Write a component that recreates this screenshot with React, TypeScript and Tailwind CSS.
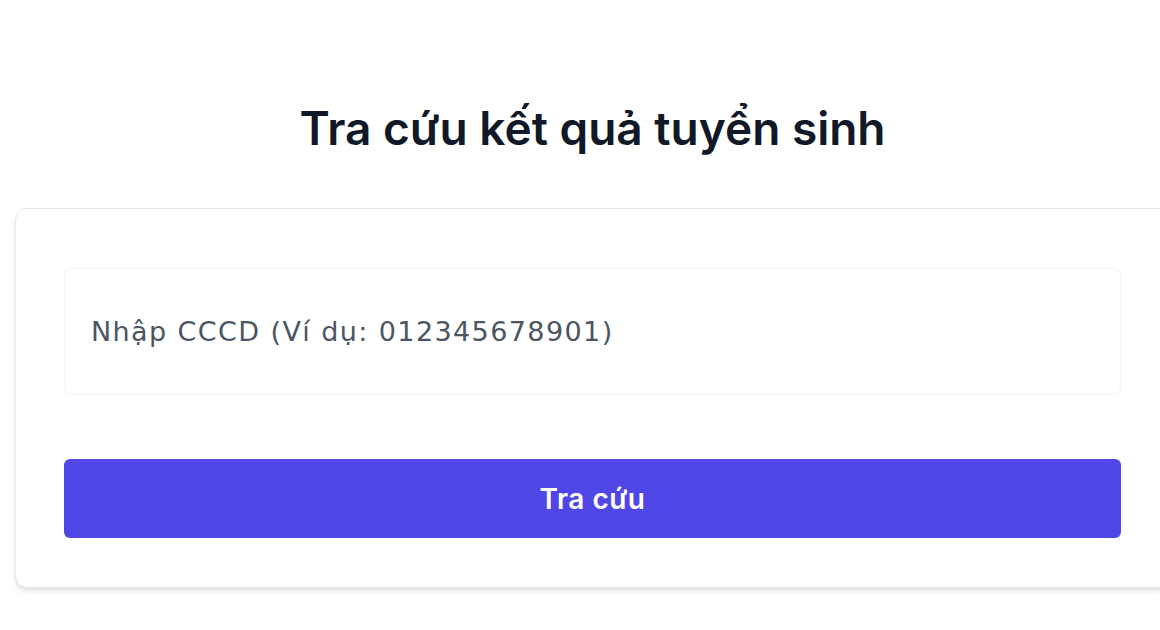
export default function App() {
  return (
    <div className="h-[630px] w-[1160px] overflow-hidden bg-white font-['Inter',sans-serif]">
      <div className="ml-[15px] w-[1155px] pt-[100px]">
        <h1 className="text-center text-[46px] leading-[56px] font-semibold text-[#111827]">
          Tra cứu kết quả tuyển sinh
        </h1>
        <div className="mt-[52px] rounded-xl border border-gray-200 bg-white px-12 pt-[59px] pb-[49px] shadow-md">
          <input
            type="text"
            placeholder="Nhập CCCD (Ví dụ: 012345678901)"
            className="block h-[127px] w-full rounded-lg border border-gray-100 bg-white px-[26px] font-['DejaVu_Sans',sans-serif] text-[27px] tracking-[1.4px] text-gray-800 outline-none placeholder:text-[#4b5563]"
          />
          <button
            type="button"
            className="mt-16 flex h-[79px] w-full items-center justify-center rounded-md bg-[#4f46e5] text-[28px] font-semibold tracking-[0.5px] text-white"
          >
            Tra cứu
          </button>
        </div>
      </div>
    </div>
  );
}
